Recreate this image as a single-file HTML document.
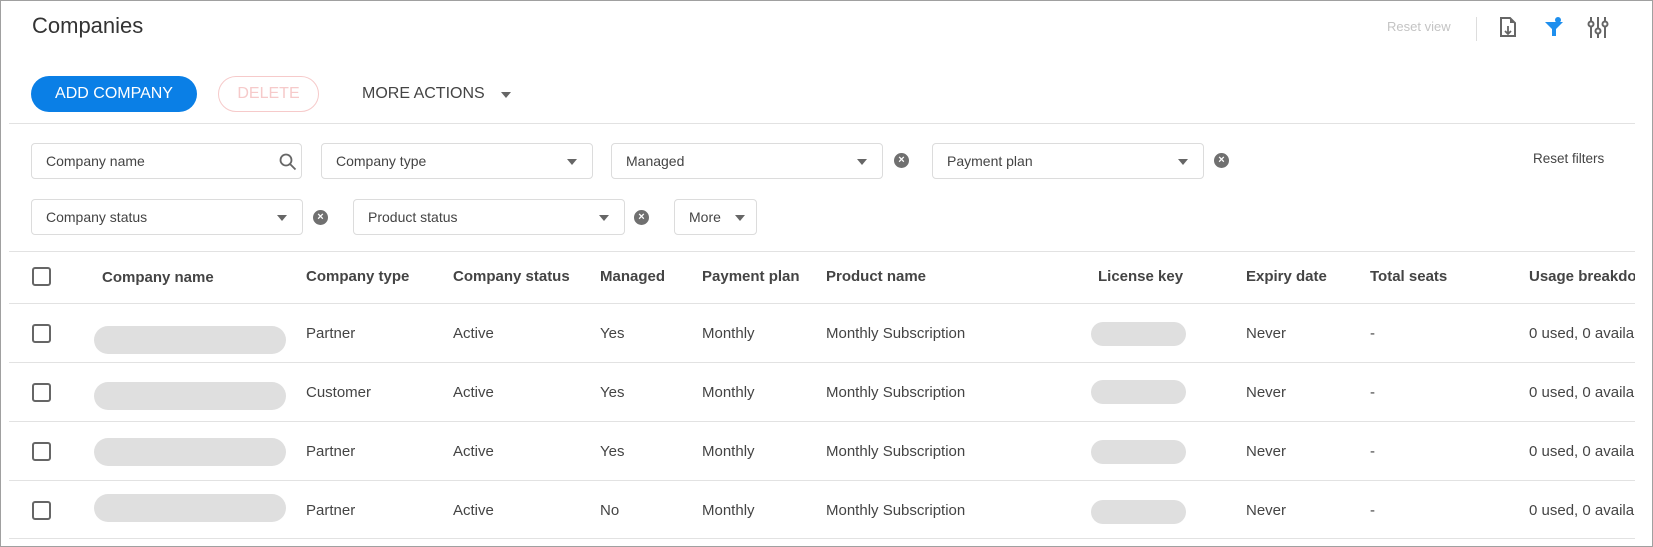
<!DOCTYPE html>
<html><head><meta charset="utf-8"><style>
*{box-sizing:border-box;margin:0;padding:0}
body{width:1653px;height:547px;background:#fff;font-family:"Liberation Sans",sans-serif;color:#333;position:relative;overflow:hidden}
.frame{position:absolute;left:0;top:0;width:1653px;height:547px;border:1px solid #a0a0a0}
.a{position:absolute}
.t{position:absolute;white-space:nowrap;line-height:1}
.box{position:absolute;border:1px solid #dcdcdc;border-radius:4px;height:36px;background:#fff}
.box span{position:absolute;left:14px;top:9px;font-size:14px;color:#444}
.arr{position:absolute;width:0;height:0;border-left:5px solid transparent;border-right:5px solid transparent;border-top:6px solid #666}
.clr{position:absolute;width:15px;height:15px;border-radius:50%;background:#707070;color:#fff;font-size:11px;font-weight:bold;text-align:center;line-height:15px}
.hl{position:absolute;left:9px;width:1626px;height:1px;background:#e2e2e2}
.cb{position:absolute;left:32px;width:19px;height:19px;border:2px solid #666;border-radius:3px}
.pill{position:absolute;background:#dfdfdf;border-radius:14px}
.th{position:absolute;font-size:15px;font-weight:bold;color:#444;white-space:nowrap;line-height:1}
.td{position:absolute;font-size:15px;color:#444;white-space:nowrap;line-height:1}
</style></head><body>
<div class="frame"></div>
<div class="t" style="left:32px;top:15px;font-size:22px;color:#333">Companies</div>
<div class="t" style="left:1387px;top:20px;font-size:13px;color:#c4c4c4">Reset view</div>
<div class="a" style="left:1476px;top:17px;width:1px;height:24px;background:#ddd"></div>
<svg class="a" style="left:1497px;top:16px" width="22" height="22" viewBox="0 0 22 22"><path d="M4 2h9l5 5v13H4z" fill="none" stroke="#666" stroke-width="2"/><path d="M13 2v5h5" fill="#666"/><path d="M11 10v8M8 15l3 3 3-3" fill="none" stroke="#666" stroke-width="1.8"/></svg>
<svg class="a" style="left:1544px;top:16px" width="20" height="21" viewBox="0 0 20 21"><path d="M1 6h18l-7 7v7h-4v-7z" fill="#1e8fee"/><circle cx="14" cy="4" r="3" fill="#1e8fee"/></svg>
<svg class="a" style="left:1587px;top:16px" width="22" height="22" viewBox="0 0 22 22" fill="none" stroke="#666" stroke-width="2"><path d="M4 1v21M11 1v21M18 1v21"/><circle cx="4" cy="8" r="2.5" fill="#fff"/><circle cx="11" cy="15" r="2.5" fill="#fff"/><circle cx="18" cy="8" r="2.5" fill="#fff"/></svg>

<div class="a" style="left:31px;top:76px;width:166px;height:36px;border-radius:18px;background:#0a7fe6;color:#fff;font-size:16px;text-align:center;line-height:36px">ADD COMPANY</div>
<div class="a" style="left:218px;top:76px;width:101px;height:36px;border-radius:18px;border:1px solid #f6caca;color:#f6caca;font-size:16px;text-align:center;line-height:34px">DELETE</div>
<div class="t" style="left:362px;top:86px;font-size:16px;color:#444">MORE ACTIONS</div>
<div class="arr" style="left:501px;top:92px"></div>
<div class="hl" style="top:123px"></div>

<div class="box" style="left:31px;top:143px;width:271px"><span>Company name</span>
<svg class="a" style="left:247px;top:9px" width="18" height="18" viewBox="0 0 18 18" fill="none" stroke="#666" stroke-width="1.8"><circle cx="7" cy="7" r="5.5"/><path d="M11 11l5.5 5.5"/></svg></div>
<div class="box" style="left:321px;top:143px;width:272px"><span>Company type</span><div class="arr" style="left:245px;top:15px"></div></div>
<div class="box" style="left:611px;top:143px;width:272px"><span>Managed</span><div class="arr" style="left:245px;top:15px"></div></div>
<div class="clr" style="left:894px;top:153px">×</div>
<div class="box" style="left:932px;top:143px;width:272px"><span>Payment plan</span><div class="arr" style="left:245px;top:15px"></div></div>
<div class="clr" style="left:1214px;top:153px">×</div>
<div class="t" style="left:1533px;top:152px;font-size:13.5px;color:#444">Reset filters</div>

<div class="box" style="left:31px;top:199px;width:272px"><span>Company status</span><div class="arr" style="left:245px;top:15px"></div></div>
<div class="clr" style="left:313px;top:210px">×</div>
<div class="box" style="left:353px;top:199px;width:272px"><span>Product status</span><div class="arr" style="left:245px;top:15px"></div></div>
<div class="clr" style="left:634px;top:210px">×</div>
<div class="box" style="left:674px;top:199px;width:83px"><span>More</span><div class="arr" style="left:60px;top:15px"></div></div>

<div class="hl" style="top:251px"></div>
<div class="cb" style="top:267px"></div>
<div class="th" style="left:102px;top:270px">Company name</div>
<div class="th" style="left:306px;top:269px">Company type</div>
<div class="th" style="left:453px;top:269px">Company status</div>
<div class="th" style="left:600px;top:269px">Managed</div>
<div class="th" style="left:702px;top:269px">Payment plan</div>
<div class="th" style="left:826px;top:269px">Product name</div>
<div class="th" style="left:1098px;top:269px">License key</div>
<div class="th" style="left:1246px;top:269px">Expiry date</div>
<div class="th" style="left:1370px;top:269px">Total seats</div>
<div class="a" style="left:1529px;top:265px;width:106px;height:20px;overflow:hidden"><div class="th" style="left:0;top:4px">Usage breakdown</div></div>

<div class="hl" style="top:303px"></div>
<div class="hl" style="top:362px"></div>
<div class="hl" style="top:421px"></div>
<div class="hl" style="top:480px"></div>
<div class="hl" style="top:538px"></div>

<div class="cb" style="top:324px"></div><div class="pill" style="left:94px;top:326px;width:192px;height:28px"></div>
<div class="td" style="left:306px;top:326px">Partner</div><div class="td" style="left:453px;top:326px">Active</div><div class="td" style="left:600px;top:326px">Yes</div><div class="td" style="left:702px;top:326px">Monthly</div><div class="td" style="left:826px;top:326px">Monthly Subscription</div>
<div class="pill" style="left:1091px;top:322px;width:95px;height:24px;border-radius:12px"></div><div class="td" style="left:1246px;top:326px">Never</div><div class="td" style="left:1370px;top:326px">-</div>
<div class="a" style="left:1529px;top:320px;width:106px;height:22px;overflow:hidden"><div class="td" style="left:0;top:6px">0 used, 0 available</div></div>

<div class="cb" style="top:383px"></div><div class="pill" style="left:94px;top:382px;width:192px;height:28px"></div>
<div class="td" style="left:306px;top:385px">Customer</div><div class="td" style="left:453px;top:385px">Active</div><div class="td" style="left:600px;top:385px">Yes</div><div class="td" style="left:702px;top:385px">Monthly</div><div class="td" style="left:826px;top:385px">Monthly Subscription</div>
<div class="pill" style="left:1091px;top:380px;width:95px;height:24px;border-radius:12px"></div><div class="td" style="left:1246px;top:385px">Never</div><div class="td" style="left:1370px;top:385px">-</div>
<div class="a" style="left:1529px;top:379px;width:106px;height:22px;overflow:hidden"><div class="td" style="left:0;top:6px">0 used, 0 available</div></div>

<div class="cb" style="top:442px"></div><div class="pill" style="left:94px;top:438px;width:192px;height:28px"></div>
<div class="td" style="left:306px;top:444px">Partner</div><div class="td" style="left:453px;top:444px">Active</div><div class="td" style="left:600px;top:444px">Yes</div><div class="td" style="left:702px;top:444px">Monthly</div><div class="td" style="left:826px;top:444px">Monthly Subscription</div>
<div class="pill" style="left:1091px;top:440px;width:95px;height:24px;border-radius:12px"></div><div class="td" style="left:1246px;top:444px">Never</div><div class="td" style="left:1370px;top:444px">-</div>
<div class="a" style="left:1529px;top:438px;width:106px;height:22px;overflow:hidden"><div class="td" style="left:0;top:6px">0 used, 0 available</div></div>

<div class="cb" style="top:501px"></div><div class="pill" style="left:94px;top:494px;width:192px;height:28px"></div>
<div class="td" style="left:306px;top:503px">Partner</div><div class="td" style="left:453px;top:503px">Active</div><div class="td" style="left:600px;top:503px">No</div><div class="td" style="left:702px;top:503px">Monthly</div><div class="td" style="left:826px;top:503px">Monthly Subscription</div>
<div class="pill" style="left:1091px;top:500px;width:95px;height:24px;border-radius:12px"></div><div class="td" style="left:1246px;top:503px">Never</div><div class="td" style="left:1370px;top:503px">-</div>
<div class="a" style="left:1529px;top:497px;width:106px;height:22px;overflow:hidden"><div class="td" style="left:0;top:6px">0 used, 0 available</div></div>
</body></html>
